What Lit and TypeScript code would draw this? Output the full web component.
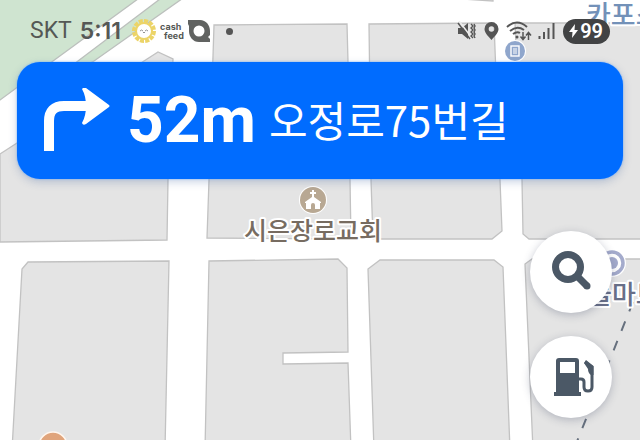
import { LitElement, html, css, svg } from "lit";
import { customElement } from "lit/decorators.js";

const blocks = [
  "0,154 158,52 173,59 168,180 167,240 0,242",
  "214,25 347,24 348,62 350,180 351,239 207,238 209,180",
  "369,24 494,23 500,180 502,231 492,239 373,239 371,180",
  "515,23 650,23 650,239 529,239 523,234 522,180",
  "28,262 169,261 165,450 12,450 22,269",
  "209,261 338,259 347,268 348,352 283,353 283,364 348,363 351,450 205,450",
  "368,269 380,260 494,260 503,267 510,450 374,450",
  "525,264 532,259 650,259 650,450 533,450",
  "415,-4 493,-4 493,1",
];

@customElement("nav-map")
class NavMap extends LitElement {
  static styles = css`
    :host { display: block; overflow: hidden; background: #fff; }
    svg { display: block; width: 100%; height: 100%; }
    .block { fill: #e4e4e4; stroke: #c2c2c2; stroke-width: 1.3; }
    .park { fill: #cfe4d0; stroke: #bcc0bd; stroke-width: 1.3; }
    .label { font-family: "Noto Sans CJK KR", sans-serif; font-weight: 500; paint-order: stroke; stroke: #fff; stroke-width: 4; stroke-linejoin: round; }
    .church { fill: #776c61; font-size: 25px; text-anchor: middle; }
    .shop { fill: #7391b8; font-size: 27px; }
    .mart { fill: #686f88; font-size: 26px; }
    .rail { stroke: #66707e; stroke-width: 2; stroke-dasharray: 10 11; }
  `;
  render() {
    return html`<svg viewBox="0 0 640 440" preserveAspectRatio="xMidYMin slice" role="img" aria-label="지도">
      <polygon class="park" points="-4,-4 142,-4 53,61 -4,103"></polygon>
      <polygon class="park" points="164,-4 78,61 40,90 94,61 186,-4"></polygon>
      ${blocks.map((p) => svg`<polygon class="block" points=${p}></polygon>`)}
      <line class="rail" x1="633" y1="302" x2="576" y2="444"></line>
      <circle cx="515" cy="51" r="11" fill="#fff"></circle>
      <circle cx="515" cy="51" r="10" fill="#8fa6cc"></circle>
      <rect x="511" y="46" width="8" height="10" fill="none" stroke="#fff" stroke-width="1.4"></rect>
      <path d="M513 49h4M513 51h4M513 53h4" stroke="#fff"></path>
      <text class="label shop" x="586" y="25">카포스</text>
      <circle cx="313" cy="200" r="14" fill="#fff"></circle>
      <circle cx="313" cy="200" r="13" fill="#b8a893"></circle>
      <path d="M312 190h2v2h2v2h-2v3l7 5v1h-1v6h-5v-4a2 2 0 0 0-4 0v4h-5v-6h-1v-1l7-5v-3h-2v-2h2z" fill="#fff"></path>
      <text class="label church" x="313" y="240">시은장로교회</text>
      <circle cx="612" cy="263" r="14" fill="#fff"></circle>
      <circle cx="612" cy="263" r="11" fill="#fff" stroke="#a4abcc" stroke-width="3.5"></circle>
      <circle cx="612" cy="263" r="6" fill="#a4abcc"></circle>
      <text class="label mart" x="588" y="304">들마트</text>
      <circle cx="53" cy="446" r="14" fill="#e0a47b" stroke="#fff6ee" stroke-width="1.5"></circle>
    </svg>`;
  }
}

@customElement("status-bar")
class StatusBar extends LitElement {
  static styles = css`
    :host { display: flex; align-items: center; justify-content: space-between; height: 62px; padding: 0 30px; color: #555855; box-sizing: border-box; }
    .side { display: flex; align-items: center; }
    .left { gap: 4px; }
    .right { gap: 8px; }
    .carrier { font: 400 23px/28px Roboto, sans-serif; }
    .time { margin: 0 7px 0 4px; font: 600 23px/28px Inter, sans-serif; }
    .app { font: 700 9px/9px Inter, sans-serif; }
    .app span { display: block; }
    .indent { padding-left: 4px; }
    .dot { width: 7px; height: 7px; border-radius: 50%; background: #555; margin-left: 12px; }
    .battery { display: flex; align-items: center; gap: 2px; height: 25px; padding: 0 7px 0 6px; border-radius: 13px; background: #424344; color: #fff; font: 600 20px/25px Roboto, sans-serif; }
    svg { display: block; flex: none; }
  `;
  render() {
    return html`
      <div class="side left">
        <span class="carrier">SKT</span>
        <span class="time">5:11</span>
        <svg width="24" height="24" viewBox="0 0 24 24">
          <circle cx="12" cy="12" r="10" fill="none" stroke="#ecd468" stroke-width="4" stroke-dasharray="4 1.2"></circle>
          <circle cx="12" cy="12" r="9" fill="#ecd468"></circle>
          <circle cx="12" cy="12" r="7" fill="#fff"></circle>
          <path d="M8 12l1.500-1 1.500 1M13 12l1.500-1 1.500 1M11 13l1 1 1-1" fill="none" stroke="#777" stroke-width=".8"></path>
        </svg>
        <div class="app"><span>cash</span><span class="indent">feed</span></div>
        <svg width="22" height="22" viewBox="0 0 22 22">
          <path fill-rule="evenodd" d="M0 0H12C18 0 22 5 22 11V15L20 17L22 19V22H11C5 22 1 17 1 11V6L0 4ZM11 5.500A5.500 5.500 0 1 0 11 16.500A5.500 5.500 0 1 0 11 5.500Z" fill="#616361"></path>
        </svg>
        <span class="dot"></span>
      </div>
      <div class="side right">
        <svg width="19" height="20" viewBox="0 0 19 20">
          <path d="M1 7h4l6-5v16l-6-5H1z" fill="#555"></path>
          <path d="M2 0l13 17" stroke="#eee" stroke-width="1.500"></path>
          <path d="M1 2l12 16M14 3l2 2-2 2 2 2-2 2 2 2-2 2 2 2M17 3l1 2-1 2 1 2-1 2 1 2-1 2 1 2" fill="none" stroke="#555" stroke-width="1.400"></path>
        </svg>
        <svg width="15" height="20" viewBox="0 0 15 20">
          <path fill-rule="evenodd" d="M7.500 1A7 7 0 0 0 .5 8C.5 12 5 16 7.500 19C10 16 14.500 12 14.500 8A7 7 0 0 0 7.500 1ZM7.500 5.200A2.800 2.800 0 1 1 7.500 10.800A2.800 2.800 0 1 1 7.500 5.200Z" fill="#555"></path>
        </svg>
        <svg width="23" height="20" viewBox="1 0 23 20" overflow="visible">
          <path d="M1 6Q11 -3 21 6M4 10Q11 4 18 9M7 13Q11 10 14 12" fill="none" stroke="#555" stroke-width="2"></path>
          <circle cx="11" cy="16" r="1.500" fill="#555"></circle>
          <path d="M17 11v7M14.500 15.500l2.500 3 2.500-3M22.500 19v-7M20 14.500l2.500-3 2.500 3" fill="none" stroke="#555" stroke-width="1.500"></path>
        </svg>
        <svg width="17" height="18" viewBox="0 0 17 18">
          <path d="M1.500 14v3M6 10v7M10.500 6v11M15.500 1v16" stroke="#555" stroke-width="2"></path>
        </svg>
        <div class="battery">
          <svg width="9" height="14" viewBox="0 0 9 14"><path d="M6 0L0 8h3.500L3 14l6-8H5.500z" fill="#fff"></path></svg>
          <span>99</span>
        </div>
      </div>
    `;
  }
}

@customElement("app-root")
class AppRoot extends LitElement {
  static styles = css`
    :host { display: block; position: relative; min-height: 100vh; overflow: hidden; }
    nav-map { position: absolute; inset: 0; }
    .overlay { position: relative; display: flex; flex-direction: column; }
    .card { display: flex; align-items: center; height: 117px; margin: 0 17px; padding: 0 24px; box-sizing: border-box; border-radius: 23px; background: #006cff; color: #fff; box-shadow: 0 0 2px #64a7ff, 0 3px 8px rgba(40, 80, 150, .25); }
    .turn { flex: none; }
    .distance { margin-left: 17px; font: 700 64px/76px Roboto, sans-serif; }
    .street { margin-left: 13px; padding-bottom: 4px; font: 400 42px/60px "Noto Sans CJK KR", sans-serif; white-space: nowrap; }
    .actions { display: flex; flex-direction: column; align-items: flex-end; gap: 23px; padding: 52px 28px 22px; }
    button { display: grid; place-items: center; width: 82px; height: 82px; padding: 0; border: 0; border-radius: 50%; background: #fff; box-shadow: 0 2px 8px rgba(60, 70, 100, .3); }
    svg { display: block; }
  `;
  render() {
    return html`
      <nav-map></nav-map>
      <div class="overlay">
        <status-bar></status-bar>
        <section class="card">
          <svg class="turn" width="69" height="66" viewBox="0 0 69 66" role="img" aria-label="우회전">
            <path d="M8 63V33Q8 18 23 18H45" fill="none" stroke="#fff" stroke-width="10"></path>
            <path d="M42 0Q43 -1 45 0L68 17Q69 18 68 19L45 36Q42 38 41 35Q45 28 45 18Q45 8 41 1Z" fill="#fff"></path>
          </svg>
          <span class="distance">52m</span>
          <span class="street">오정로75번길</span>
        </section>
        <div class="actions">
          <button aria-label="검색">
            <svg width="42" height="42" viewBox="0 0 42 42">
              <circle cx="18" cy="16" r="12.500" fill="none" stroke="#4b5866" stroke-width="7"></circle>
              <path d="M27 25L37 35" stroke="#4b5866" stroke-width="7"></path>
              <circle cx="37" cy="35" r="3.500" fill="#4b5866"></circle>
            </svg>
          </button>
          <button aria-label="주유소">
            <svg width="48" height="38" viewBox="-7 0 48 38">
              <path fill-rule="evenodd" d="M2 3Q2 0 5 0H22Q25 0 25 3V34H27V38H0V34H2ZM6 4V15H21V4Z" fill="#4b5866"></path>
              <path d="M25 21H27Q30 21 30 24V29Q30 33 34 33Q38 33 38 29V9L31 4" fill="none" stroke="#4b5866" stroke-width="3"></path>
              <path d="M32 2L39.500 8V17H37Q34 15 34 11L30 5Z" fill="#4b5866"></path>
            </svg>
          </button>
        </div>
      </div>
    `;
  }
}
